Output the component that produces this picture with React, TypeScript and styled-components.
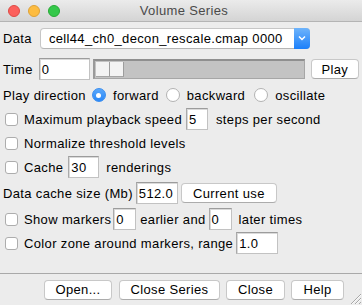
import styled, { createGlobalStyle } from "styled-components";

const Global = createGlobalStyle`
  html, body {
    margin: 0;
    padding: 0;
    background: #ececec;
  }
  body {
    font-family: "Liberation Sans", Arial, sans-serif;
    font-size: 13px;
    letter-spacing: 0.35px;
    color: #000;
  }
`

const Window = styled.div`
  position: relative;
  width: 362px;
  height: 305px;
  display: flex;
  flex-direction: column;
  background: #ececec;
  overflow: hidden;
`

const TitleBar = styled.div`
  height: 22px;
  flex: none;
  display: flex;
  align-items: center;
  position: relative;
  background: linear-gradient(#ebebeb, #d4d4d4);
  border-bottom: 1px solid #b4b4b4;
  box-sizing: border-box;
`

const Lights = styled.div`
  display: flex;
  gap: 8px;
  padding-left: 8px;
`

const Light = styled.span<{ $c: string; $b: string }>`
  width: 12px;
  height: 12px;
  border-radius: 50%;
  background: ${p => p.$c};
  border: 0.5px solid ${p => p.$b};
  box-sizing: border-box;
`

const Title = styled.div`
  flex: 1;
  text-align: center;
  color: #4a4a4a;
  margin-left: -54px;
`

const Content = styled.div`
  flex: 1;
  display: flex;
  flex-direction: column;
  padding: 1px 3px 0;
`

const Row = styled.div<{ $h: number }>`
  height: ${p => p.$h}px;
  flex: none;
  display: flex;
  align-items: center;
  white-space: nowrap;
`

const Text = styled.span<{ $ml?: number }>`
  margin-left: ${p => p.$ml ?? 0}px;
`

const Select = styled.div`
  margin-left: 8px;
  width: 270px;
  height: 21px;
  display: flex;
  align-items: center;
  box-sizing: border-box;
  background: #fff;
  border: 1px solid #c6c6c6;
  border-bottom-color: #b5b5b5;
  border-radius: 4px;
  padding-left: 8px;
`

const SelectValue = styled.span`
  flex: 1;
`

const SelectArrow = styled.span`
  width: 16px;
  height: 21px;
  margin: -1px -1px -1px 0;
  border-radius: 0 4px 4px 0;
  background: linear-gradient(#6eb4fb, #1b7ffa);
  display: flex;
  align-items: center;
  justify-content: center;
`

const Field = styled.div<{ $w: number; $ml?: number }>`
  width: ${p => p.$w}px;
  height: 22px;
  margin-left: ${p => p.$ml ?? 0}px;
  box-sizing: border-box;
  background: #fff;
  border: 1px solid #c2c2c2;
  border-top-color: #9c9c9c;
  border-left-color: #aaaaaa;
  box-shadow: inset 1px 1px 0 #dadada;
  padding: 0 2px;
  display: flex;
  align-items: center;
`

const Slider = styled.div`
  margin-left: 3px;
  width: 212px;
  height: 20px;
  box-sizing: border-box;
  background: #c3c3c3;
  border: 1px solid #a6a6a6;
  border-top: 2px solid #8f8f8f;
  border-left: 2px solid #9a9a9a;
  display: flex;
  align-items: stretch;
  padding: 1px 0 1px 1px;
`

const Thumb = styled.div`
  width: 14px;
  background: #f3f3f3;
  border-right: 1px solid #9d9d9d;
  border-bottom: 1px solid #a5a5a5;
  box-sizing: border-box;
`

const Button = styled.div<{ $w: number; $ml?: number }>`
  width: ${p => p.$w}px;
  height: 20px;
  margin-left: ${p => p.$ml ?? 0}px;
  box-sizing: border-box;
  background: #fff;
  border: 1px solid #c8c8c8;
  border-bottom-color: #acacac;
  border-radius: 4px;
  display: flex;
  align-items: center;
  justify-content: center;
`

const Radio = styled.span<{ $on?: boolean; $ml?: number }>`
  width: 14px;
  height: 14px;
  margin-left: ${p => p.$ml ?? 0}px;
  margin-right: 7px;
  border-radius: 50%;
  box-sizing: border-box;
  background: ${p => (p.$on ? "linear-gradient(#5aa8fb, #2a88f8)" : "#fff")};
  border: 1px solid ${p => (p.$on ? "#3a8ef0" : "#b2b2b2")};
  display: flex;
  align-items: center;
  justify-content: center;
  &::after {
    content: "";
    display: ${p => (p.$on ? "block" : "none")};
    width: 5px;
    height: 5px;
    border-radius: 50%;
    background: #fff;
  }
`

const Check = styled.span`
  width: 13px;
  height: 13px;
  margin-left: 2px;
  margin-right: 6px;
  border-radius: 3px;
  box-sizing: border-box;
  background: #fff;
  border: 1px solid #adadad;
  flex: none;
`

const Footer = styled.div`
  border-top: 1px solid #a9a9a9;
  height: 31px;
  flex: none;
  display: flex;
  align-items: center;
  justify-content: flex-end;
  padding-right: 18px;
`

const Grip = styled.svg`
  position: absolute;
  right: 0;
  bottom: 0;
`

export default function App() {
  return (
    <>
      <Global />
      <Window>
        <TitleBar>
          <Lights>
            <Light $c="#fc605c" $b="#de4a45" />
            <Light $c="#fdbc40" $b="#dea236" />
            <Light $c="#34c84a" $b="#27aa35" />
          </Lights>
          <Title>Volume Series</Title>
        </TitleBar>
        <Content>
          <Row $h={30}>
            <Text>Data</Text>
            <Select>
              <SelectValue>cell44_ch0_decon_rescale.cmap 0000</SelectValue>
              <SelectArrow>
                <svg width="8" height="6" viewBox="0 0 8 6">
                  <path d="M1 1.5 L4 4.5 L7 1.5" fill="none" stroke="#fff" strokeWidth="1.5" />
                </svg>
              </SelectArrow>
            </Select>
          </Row>
          <Row $h={32}>
            <Text>Time</Text>
            <Field $w={51} $ml={6}>0</Field>
            <Slider>
              <Thumb />
              <Thumb />
            </Slider>
            <Button $w={48} $ml={6}>Play</Button>
          </Row>
          <Row $h={20}>
            <Text>Play direction</Text>
            <Radio $on $ml={6} />
            <Text>forward</Text>
            <Radio $ml={7} />
            <Text>backward</Text>
            <Radio $ml={9} />
            <Text>oscillate</Text>
          </Row>
          <Row $h={28}>
            <Check />
            <Text>Maximum playback speed</Text>
            <Field $w={22} $ml={4}>5</Field>
            <Text $ml={8}>steps per second</Text>
          </Row>
          <Row $h={20}>
            <Check />
            <Text>Normalize threshold levels</Text>
          </Row>
          <Row $h={28}>
            <Check />
            <Text>Cache</Text>
            <Field $w={31} $ml={5}>30</Field>
            <Text $ml={7}>renderings</Text>
          </Row>
          <Row $h={24}>
            <Text>Data cache size (Mb)</Text>
            <Field $w={42} $ml={3}>512.0</Field>
            <Button $w={96} $ml={3}>Current use</Button>
          </Row>
          <Row $h={28}>
            <Check />
            <Text>Show markers</Text>
            <Field $w={23} $ml={2}>0</Field>
            <Text $ml={4}>earlier and</Text>
            <Field $w={23} $ml={3}>0</Field>
            <Text $ml={7}>later times</Text>
          </Row>
          <Row $h={20}>
            <Check />
            <Text>Color zone around markers, range</Text>
            <Field $w={42} $ml={3}>1.0</Field>
          </Row>
        </Content>
        <Footer>
          <Button $w={68}>Open...</Button>
          <Button $w={101} $ml={7}>Close Series</Button>
          <Button $w={59} $ml={6}>Close</Button>
          <Button $w={53} $ml={6}>Help</Button>
        </Footer>
        <Grip width="15" height="15" viewBox="0 0 15 15">
          <rect x="0" y="0" width="15" height="15" fill="#ececec" />
          <path d="M4 14 L14 4 M8 14 L14 8 M12 14 L14 12" stroke="#a8a8a8" strokeWidth="1" />
          <path d="M5 14 L14 5 M9 14 L14 9" stroke="#fafafa" strokeWidth="1" />
        </Grip>
      </Window>
    </>
  )
}
